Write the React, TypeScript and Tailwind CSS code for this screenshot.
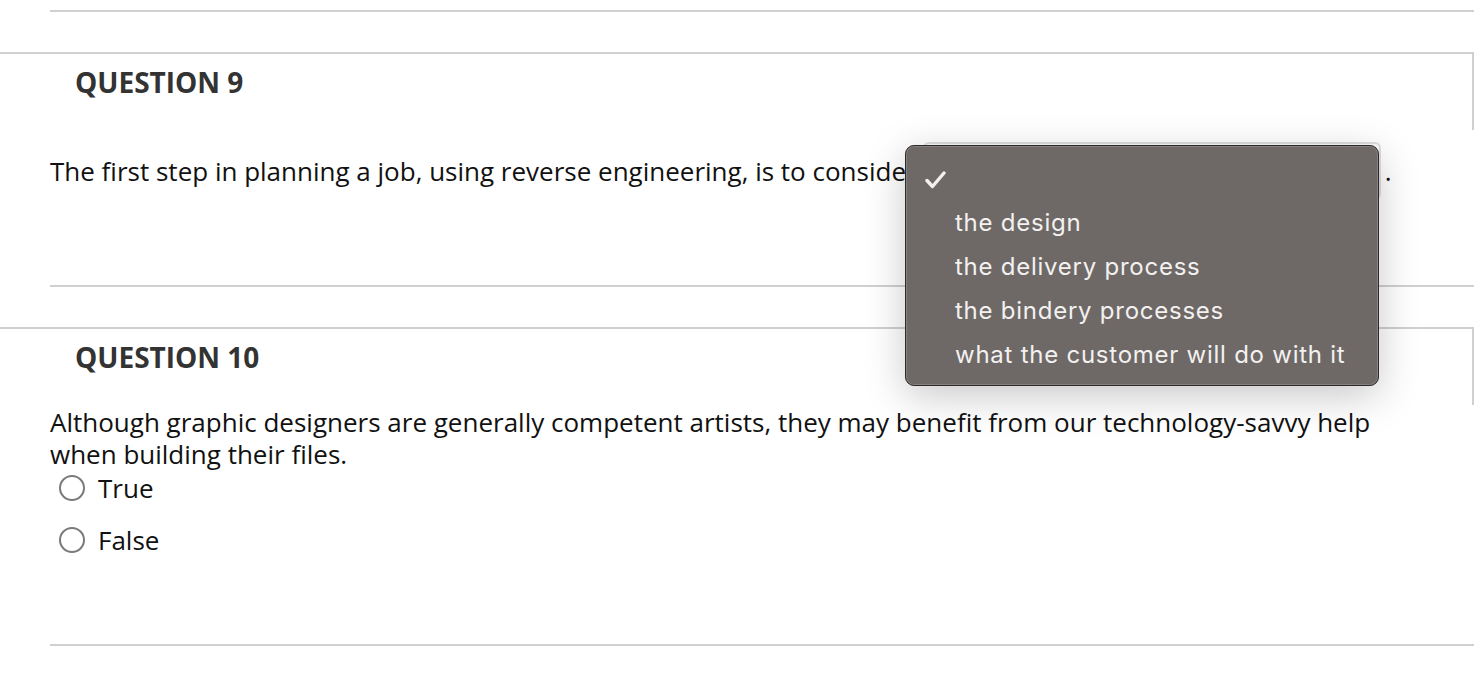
import { useState } from 'react'

const options = [
  'the design',
  'the delivery process',
  'the bindery processes',
  'what the customer will do with it',
]

function Radio({ label }: { label: string }) {
  return (
    <label className="flex items-center gap-[13px] h-[34px] pl-[59px]">
      <span className="w-[26px] h-[26px] rounded-full border-2 border-[#7a7a7a] bg-white" />
      <span>{label}</span>
    </label>
  )
}

function QuestionHead({ n }: { n: number }) {
  return (
    <div className="border-t-2 border-r-2 border-[#d0d0d0] h-[78px] pl-[75px] pt-[14px]">
      <h2 className="text-[28px] leading-none font-bold text-[#333]">QUESTION {n}</h2>
    </div>
  )
}

export default function App() {
  const [open] = useState(true)
  return (
    <div className="relative w-[1474px] h-[676px] overflow-hidden bg-white text-[#111] font-['Open_Sans',sans-serif]">
      <div className="pt-[10px]">
        <div className="ml-[50px] border-t-2 border-[#d0d0d0]" />
      </div>

      {/* question 9 */}
      <section className="mt-[40px]">
        <QuestionHead n={9} />
        <p className="px-[50px] pt-[12px] text-[26px] leading-none flex items-center">
          <span>The first step in planning a job, using reverse engineering, is to consider</span>
          <span className="ml-[6px] w-[458px] h-[58px] rounded-md border-2 border-[#dedede] bg-[#fafafa]" />
          <span className="ml-[4px]">.</span>
        </p>
        <div className="mt-[85px] ml-[50px] border-t-2 border-[#d0d0d0]" />
      </section>

      {/* question 10 */}
      <section className="mt-[40px]">
        <QuestionHead n={10} />
        <p className="px-[50px] pt-[1px] text-[26px] leading-[32px]">
          Although graphic designers are generally competent artists, they may benefit from our technology-savvy help
          when building their files.
        </p>
        <div className="text-[26px] leading-none mt-[1px] flex flex-col gap-[18px]">
          <Radio label="True" />
          <Radio label="False" />
        </div>
        <div className="mt-[87px] ml-[50px] border-t-2 border-[#d0d0d0]" />
      </section>

      {open && (
        <div className="absolute left-[905px] top-[145px] w-[474px] h-[241px] rounded-[9px] border border-[#2c2a29] bg-[#6e6967] shadow-[0_10px_40px_rgba(0,0,0,0.22)] ring-1 ring-inset ring-[#86817e] font-['Inter',sans-serif] text-[#f3f1f0] text-[24px] tracking-[0.75px]">
          <div className="h-[55px] pl-[19px] pt-[25px]">
            <svg width="21" height="18" viewBox="0 0 21 18" fill="none">
              <path d="M2 9.5 L7.5 15.5 L19 2" stroke="#f3f1f0" strokeWidth="3.4" strokeLinecap="round" strokeLinejoin="round" />
            </svg>
          </div>
          <ul className="pl-[49px]">
            {options.map((o) => (
              <li key={o} className="h-[44px] leading-[44px]">
                {o}
              </li>
            ))}
          </ul>
        </div>
      )}
    </div>
  )
}
